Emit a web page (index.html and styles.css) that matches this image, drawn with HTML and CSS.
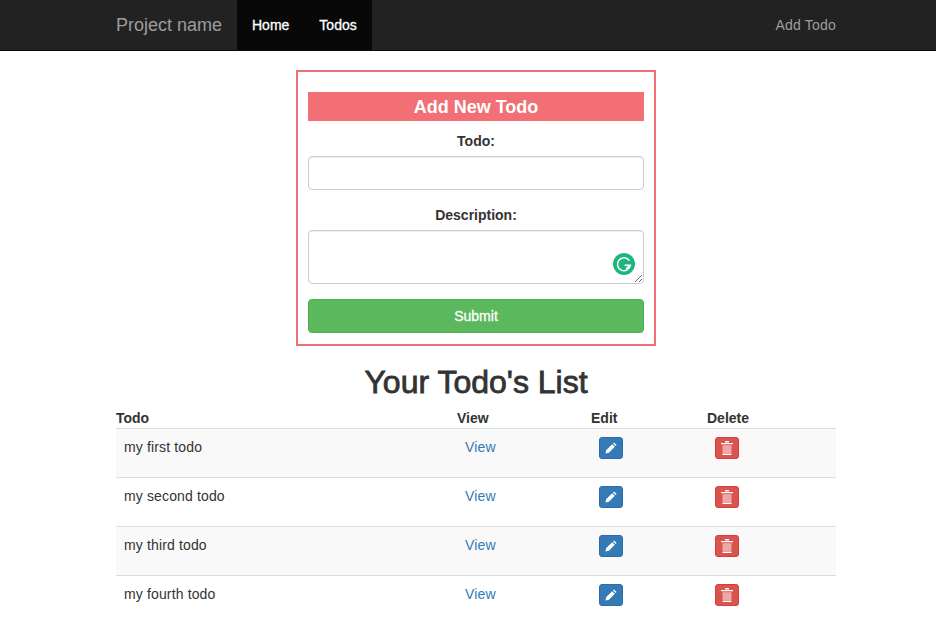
FILE: index.html
```html
<!DOCTYPE html>
<html>
<head>
    <meta charset="UTF-8">
    <title>Todo App</title>
    <link rel="stylesheet" href="styles.css">
</head>
<body>
    <nav class="navbar">
        <div class="container nav-inner">
            <a class="brand" href="#">Project name</a>
            <ul class="nav-links">
                <li><a href="#">Home</a></li>
                <li><a href="#">Todos</a></li>
            </ul>
            <a class="nav-right" href="#">Add Todo</a>
        </div>
    </nav>

    <div class="container">
        <form class="todo-form">
            <h3 class="form-title">Add New Todo</h3>
            <div class="form-group">
                <label for="todo">Todo:</label>
                <input type="text" id="todo" class="form-control">
            </div>
            <div class="form-group">
                <label for="description">Description:</label>
                <div class="textarea-wrap">
                    <textarea id="description" class="form-control area"></textarea>
                    <svg class="grammarly" width="22" height="22" viewBox="0 0 22 22">
                        <circle cx="11" cy="11" r="11" fill="#1fb57f"/>
                        <path d="M16.4 7.6A6.5 6.5 0 1 0 17.4 12.2H11.6" fill="none" stroke="#fff" stroke-width="1.5"/>
                        <path d="M13.2 15.6L17 12.4" fill="none" stroke="#fff" stroke-width="1.5"/>
                    </svg>
                </div>
            </div>
            <button type="button" class="btn-submit">Submit</button>
        </form>

        <h1 class="list-title">Your Todo's List</h1>

        <table class="todo-table">
            <thead>
                <tr>
                    <th class="col-todo">Todo</th>
                    <th class="col-view">View</th>
                    <th class="col-edit">Edit</th>
                    <th>Delete</th>
                </tr>
            </thead>
            <tbody>
                <tr>
                    <td>my first todo</td>
                    <td class="cell-view"><a href="#">View</a></td>
                    <td class="cell-edit"><a class="icon-btn blue" href="#"><svg width="12" height="12" viewBox="0 0 12 12"><path d="M9 .4l2.6 2.6-1 1L8 1.4zM7.2 2.2l2.6 2.6-5.9 5.9L.4 11.6l.9-3.5z" fill="#fff"/></svg></a></td>
                    <td class="cell-delete"><a class="icon-btn red" href="#"><svg width="12" height="14" viewBox="0 0 12 14"><path d="M4 0h4v1.4H4zM0 2h12v1.2H0z" fill="#fff"/><path d="M1.5 4.2h9v8.4h-9z" fill="#fff" fill-opacity=".5"/><path d="M1.5 12.8h9V14h-9z" fill="#fff"/></svg></a></td>
                </tr>
                <tr>
                    <td>my second todo</td>
                    <td class="cell-view"><a href="#">View</a></td>
                    <td class="cell-edit"><a class="icon-btn blue" href="#"><svg width="12" height="12" viewBox="0 0 12 12"><path d="M9 .4l2.6 2.6-1 1L8 1.4zM7.2 2.2l2.6 2.6-5.9 5.9L.4 11.6l.9-3.5z" fill="#fff"/></svg></a></td>
                    <td class="cell-delete"><a class="icon-btn red" href="#"><svg width="12" height="14" viewBox="0 0 12 14"><path d="M4 0h4v1.4H4zM0 2h12v1.2H0z" fill="#fff"/><path d="M1.5 4.2h9v8.4h-9z" fill="#fff" fill-opacity=".5"/><path d="M1.5 12.8h9V14h-9z" fill="#fff"/></svg></a></td>
                </tr>
                <tr>
                    <td>my third todo</td>
                    <td class="cell-view"><a href="#">View</a></td>
                    <td class="cell-edit"><a class="icon-btn blue" href="#"><svg width="12" height="12" viewBox="0 0 12 12"><path d="M9 .4l2.6 2.6-1 1L8 1.4zM7.2 2.2l2.6 2.6-5.9 5.9L.4 11.6l.9-3.5z" fill="#fff"/></svg></a></td>
                    <td class="cell-delete"><a class="icon-btn red" href="#"><svg width="12" height="14" viewBox="0 0 12 14"><path d="M4 0h4v1.4H4zM0 2h12v1.2H0z" fill="#fff"/><path d="M1.5 4.2h9v8.4h-9z" fill="#fff" fill-opacity=".5"/><path d="M1.5 12.8h9V14h-9z" fill="#fff"/></svg></a></td>
                </tr>
                <tr>
                    <td>my fourth todo</td>
                    <td class="cell-view"><a href="#">View</a></td>
                    <td class="cell-edit"><a class="icon-btn blue" href="#"><svg width="12" height="12" viewBox="0 0 12 12"><path d="M9 .4l2.6 2.6-1 1L8 1.4zM7.2 2.2l2.6 2.6-5.9 5.9L.4 11.6l.9-3.5z" fill="#fff"/></svg></a></td>
                    <td class="cell-delete"><a class="icon-btn red" href="#"><svg width="12" height="14" viewBox="0 0 12 14"><path d="M4 0h4v1.4H4zM0 2h12v1.2H0z" fill="#fff"/><path d="M1.5 4.2h9v8.4h-9z" fill="#fff" fill-opacity=".5"/><path d="M1.5 12.8h9V14h-9z" fill="#fff"/></svg></a></td>
                </tr>
            </tbody>
        </table>
    </div>
</body>
</html>
```

FILE: styles.css
```css
* {
    box-sizing: border-box;
}

html {
    height: 635px;
    overflow: hidden;
}

/* page is a bit wider than the window, content sits 8px right of centre */
body {
    width: 952px;
    margin: 0;
    font-family: "Liberation Sans", Arial, sans-serif;
    font-size: 14px;
    line-height: 20px;
    color: #333;
    background: #fff;
}

a {
    text-decoration: none;
}

.container {
    width: 720px;
    margin: 0 auto;
}

.navbar {
    height: 51px;
    background: #222;
    border-bottom: 1px solid #080808;
}

.nav-inner {
    display: flex;
    height: 50px;
}

.brand {
    font-size: 18px;
    line-height: 50px;
    color: #9d9d9d;
    width: 121px;
}

.nav-links {
    display: flex;
    list-style: none;
    margin: 0;
    padding: 0;
    background: #080808;
}

.nav-links a {
    display: block;
    padding: 0 15px;
    line-height: 50px;
    color: #fff;
    -webkit-text-stroke: .3px #fff;
}

.nav-right {
    margin-left: auto;
    line-height: 50px;
    color: #9d9d9d;
    letter-spacing: .2px;
}

.todo-form {
    width: 360px;
    height: 276px;
    margin: 19px auto 0;
    padding: 20px 10px 0;
    border: 2px solid #f16f75;
}

.form-title {
    margin: 0 0 10px;
    height: 29px;
    font-size: 18px;
    line-height: 31px;
    font-weight: bold;
    text-align: center;
    color: #fff;
    background: #f16f75;
}

.form-group {
    margin-bottom: 15px;
}

label {
    display: block;
    margin-bottom: 5px;
    font-weight: bold;
    text-align: center;
}

.form-control {
    display: block;
    width: 100%;
    height: 34px;
    padding: 6px 12px;
    border: 1px solid #ccc;
    border-radius: 4px;
    box-shadow: inset 0 1px 1px rgba(0, 0, 0, .075);
    background: #fff;
    font: inherit;
    outline: none;
}

.area {
    height: 54px;
}

.textarea-wrap {
    position: relative;
}

.grammarly {
    position: absolute;
    right: 9px;
    bottom: 9px;
}

.btn-submit {
    display: block;
    width: 100%;
    height: 34px;
    border: 1px solid #4cae4c;
    border-radius: 4px;
    background: #5cb85c;
    color: #fff;
    font: inherit;
    -webkit-text-stroke: .3px #fff;
}

.list-title {
    margin: 18px 0 0;
    height: 46px;
    font-size: 32px;
    line-height: 36px;
    font-weight: normal;
    text-align: center;
    -webkit-text-stroke: .8px #333;
}

.todo-table {
    width: 720px;
    table-layout: fixed;
    border-collapse: collapse;
}

.todo-table th {
    padding: 0;
    height: 18px;
    line-height: 17px;
    text-align: left;
    border-bottom: 1px solid #ddd;
}

.col-todo {
    width: 341px;
}

.col-view {
    width: 134px;
}

.col-edit {
    width: 116px;
}

.todo-table td {
    height: 49px;
    padding: 8px;
    vertical-align: top;
    border-top: 1px solid #ddd;
    letter-spacing: .14px;
}

.todo-table tbody tr:nth-child(odd) {
    background: #f9f9f9;
}

.cell-view a {
    color: #337ab7;
}

.icon-btn {
    display: flex;
    align-items: center;
    justify-content: center;
    width: 24px;
    height: 22px;
    border-radius: 3px;
}

.blue {
    background: #337ab7;
    border: 1px solid #2e6da4;
}

.red {
    background: #d9534f;
    border: 1px solid #d43f3a;
}
```
